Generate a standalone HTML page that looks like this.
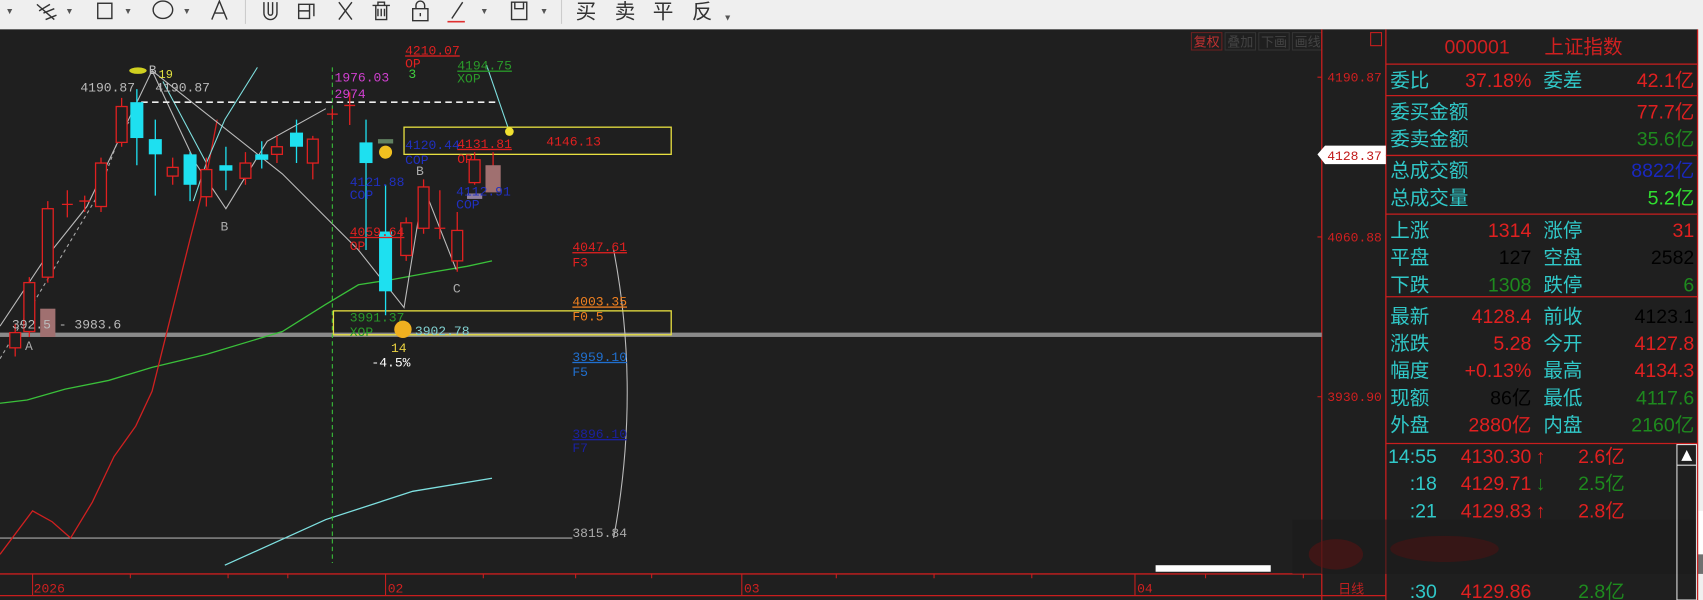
<!DOCTYPE html>
<html><head><meta charset="utf-8"><style>
html,body{margin:0;padding:0;width:1703px;height:600px;overflow:hidden;background:#efefef}
svg{display:block}
.m{font-family:"Liberation Mono","Noto Sans CJK SC",monospace;font-size:12px}
.p{font-family:"Liberation Sans","Noto Sans CJK SC",sans-serif;font-size:18px}
.tb{font-family:"Liberation Sans","Noto Sans CJK SC",sans-serif;font-size:19px;fill:#333}
</style></head><body>
<svg width="1703" height="600" viewBox="0 0 1568 552" preserveAspectRatio="none" xmlns="http://www.w3.org/2000/svg">
<rect x="0" y="0" width="1568" height="552" fill="#efefef"/>
<!-- toolbar -->
<g stroke="#333" fill="none" stroke-width="1.3">
<path d="M34 4 L50 18 M36 10 L46 4 M40 12 L50 8 M42 18 L52 14"/>
<rect x="90" y="3" width="13" height="14"/>
<ellipse cx="150" cy="9" rx="9" ry="8"/>
<path d="M195 18 L202 1 L209 18 M198 12 L206 12"/>
<path d="M243 2 V12 A6 6 0 0 0 255 12 V2 M247 2 V12 A2 2 0 0 0 251 12 V2"/>
<path d="M275 4 H285 V17 H275 Z M275 10 H285 M285 4 H289 V15"/>
<path d="M312 2 L324 18 M324 2 L312 18"/>
<path d="M343 5 H359 M346 5 V18 H356 V5 M348 8 V15 M351 8 V15 M354 8 V15 M348 5 V2 H354 V5"/>
<path d="M380 8 H394 V19 H380 Z M383 8 V5 A4 4 0 0 1 391 5 V8 M387 12 V15"/>
<path d="M416 17 L426 2"/>
<path d="M471 2 H485 V18 H471 Z M474 2 V8 H482 V2"/>
</g>
<path d="M412 20 H428" stroke="#e03030" stroke-width="1.5"/>
<path d="M226 0 V22 M517 0 V22" stroke="#ccc"/>
<g fill="#555" font-size="8" font-family="Liberation Sans">
<text x="5" y="13">▼</text><text x="60" y="13">▼</text><text x="114" y="13">▼</text><text x="168" y="13">▼</text><text x="442" y="13">▼</text><text x="497" y="13">▼</text><text x="666" y="19">▼</text>
</g>
<text class="tb" x="530" y="17">买</text><text class="tb" x="566" y="17">卖</text><text class="tb" x="601" y="17">平</text><text class="tb" x="637" y="17">反</text>
<!-- main dark area -->
<rect x="0" y="27" width="1563" height="525" fill="#1f1f1f"/>
<!-- top right buttons -->
<g class="m" font-size="11">
<rect x="1097" y="30" width="28" height="16" fill="none" stroke="#6a2020"/><text x="1099" y="43" fill="#c03030">复权</text>
<rect x="1128" y="30" width="28" height="16" fill="none" stroke="#333"/><text x="1130" y="43" fill="#444">叠加</text>
<rect x="1159" y="30" width="28" height="16" fill="none" stroke="#333"/><text x="1161" y="43" fill="#444">下画</text>
<rect x="1190" y="30" width="27" height="16" fill="none" stroke="#333"/><text x="1192" y="43" fill="#444">画线</text>
</g>
<!-- axes -->
<path d="M1217 27 V552 M1276 27 V552 M0 528 H1217 M0 548 H1276" stroke="#c81e1e" stroke-width="1.2"/>
<path d="M30 528 V548 M355 528 V548 M683 528 V548 M1045 528 V548 M120 528 v4 M210 528 v4 M265 528 v4 M445 528 v4 M530 528 v4 M600 528 v4 M770 528 v4 M860 528 v4 M950 528 v4 M1110 528 v4 M1200 528 v4 M1217 71 h-4 M1217 218 h-4 M1217 365 h-4" stroke="#c81e1e"/>
<g class="m" fill="#d02020">
<text x="31" y="545">2026</text><text x="357" y="545">02</text><text x="685" y="545">03</text><text x="1047" y="545">04</text>
<text x="1222" y="75">4190.87</text><text x="1222" y="222">4060.88</text><text x="1222" y="369">3930.90</text>
</g>
<text x="1232" y="546" class="m" fill="#c02020" font-size="13">日线</text>
<rect x="1262" y="30" width="10" height="12" fill="none" stroke="#c81e1e"/>
<path d="M1213 142 L1220 134 H1276 V151 H1220 Z" fill="#fff"/>
<text x="1222" y="147" class="m" fill="#c01818">4128.37</text>
<!-- blurred zone -->
<rect x="1190" y="478" width="378" height="50" fill="#1a1a1a" opacity=".6"/>
<ellipse cx="1330" cy="505" rx="50" ry="12" fill="#501010" opacity=".5"/>
<ellipse cx="1230" cy="510" rx="25" ry="14" fill="#601010" opacity=".5"/>
<rect x="1064" y="520" width="106" height="6" fill="#fff"/>
<rect x="1563" y="470" width="5" height="40" fill="#fff"/>
<!-- gray horizontal -->
<rect x="0" y="306" width="1217" height="4" fill="#8a8a8a"/>
<path d="M0 495 H527" stroke="#aaa"/>
<!-- MA lines -->
<polyline points="0,371 25,368 60,358 100,350 140,338 190,326 260,305 300,280 330,262 362,257 400,250 430,245 453,240" fill="none" stroke="#3ac03a" stroke-width="1.2"/>
<polyline points="0,510 30,470 48,480 65,495 85,462 105,420 125,392 140,360 150,320 165,260 175,220 190,162 200,110" fill="none" stroke="#d02020" stroke-width="1.2"/>
<polyline points="207,520 300,478 380,452 453,440" fill="none" stroke="#7ee0e0" stroke-width="1.2"/>
<polyline points="0,330 30,280 60,230 90,180 112,120 128,102" fill="none" stroke="#aaa" stroke-dasharray="3 3"/>
<polyline points="0,300 40,240 80,190 140,65 180,150 208,192 246,130 300,100" fill="none" stroke="#bbb"/>
<polyline points="140,65 260,160 330,230 372,283 390,172 420,248" fill="none" stroke="#bbb"/>
<polyline points="150,75 190,150 207,110 237,62" fill="none" stroke="#7ee0e0"/>
<polyline points="178,185 190,150" fill="none" stroke="#7ee0e0"/>
<polyline points="448,60 468,118" fill="none" stroke="#7ee0e0"/>
<path d="M130 94 H460" stroke="#eee" stroke-width="1.5" stroke-dasharray="6 4"/>
<path d="M306 62 V518" stroke="#3ac03a" stroke-dasharray="4 3"/>
<!-- fib arc -->
<path d="M565 230 Q590 360 565 495" fill="none" stroke="#bbb"/>
<!-- yellow boxes -->
<rect x="372" y="117" width="246" height="25" fill="none" stroke="#e8e040" stroke-width="1.2"/>
<rect x="307" y="286" width="311" height="22" fill="none" stroke="#e8e040" stroke-width="1.2"/>
<circle cx="469" cy="121" r="4" fill="#f0e030"/>
<!-- candles -->
<g stroke="#e02020" fill="none" stroke-width="1.2">
<path d="M14 298 v30 M27 255 v55 M44 185 v75 M62 175 v25 M78 180 v15 M93 145 v50 M112 90 v45 M159 145 v25 M190 145 v45 M226 140 v30 M255 125 v25 M288 125 v40 M306 100 v10 M322 85 v30 M374 200 v40 M390 165 v50 M405 175 v45 M421 195 v55 M437 140 v30 M454 140 v15"/>
<rect x="9" y="306" width="10" height="14" fill="#1f1f1f"/>
<rect x="22" y="260" width="10" height="45" fill="#1f1f1f"/>
<rect x="39" y="192" width="10" height="63" fill="#1f1f1f"/>
<rect x="88" y="150" width="10" height="40" fill="#1f1f1f"/>
<rect x="107" y="98" width="10" height="33" fill="#1f1f1f"/>
<rect x="154" y="154" width="10" height="8" fill="#1f1f1f"/>
<rect x="185" y="156" width="10" height="25" fill="#1f1f1f"/>
<rect x="221" y="150" width="10" height="14" fill="#1f1f1f"/>
<rect x="250" y="135" width="10" height="7" fill="#1f1f1f"/>
<rect x="283" y="128" width="10" height="22" fill="#1f1f1f"/>
<rect x="369" y="205" width="10" height="30" fill="#1f1f1f"/>
<rect x="385" y="172" width="10" height="38" fill="#1f1f1f"/>
<rect x="416" y="212" width="10" height="28" fill="#1f1f1f"/>
<rect x="432" y="147" width="10" height="21" fill="#1f1f1f"/>
<path d="M57 188 h10 M73 185 h10 M301 105 h10 M317 97 h10 M400 210 h10"/>
</g>
<rect x="37" y="284" width="14" height="26" fill="#a07070"/>
<rect x="447" y="152" width="14" height="25" fill="#a07070"/>
<g stroke="#1ee0f0" stroke-width="1.2"><path d="M126 82 v70 M143 110 v70 M175 140 v45 M208 135 v40 M241 130 v25 M273 110 v40 M337 110 v120 M355 170 v120"/></g>
<g fill="#1ee0f0">
<rect x="120" y="94" width="12" height="33"/><rect x="137" y="128" width="12" height="14"/><rect x="169" y="142" width="12" height="28"/>
<rect x="202" y="152" width="12" height="5"/><rect x="235" y="142" width="12" height="5"/><rect x="267" y="122" width="12" height="13"/>
<rect x="331" y="131" width="12" height="19"/><rect x="349" y="213" width="12" height="55"/>
</g>
<rect x="430" y="178" width="14" height="5" fill="#9080a0"/>
<!-- labels on chart -->
<g class="m">
<text x="74" y="84" fill="#bbb">4190.87</text><text x="143" y="84" fill="#bbb">4190.87</text>
<text x="137" y="68" fill="#bbb">B</text><text x="146" y="72" fill="#e0e040" font-size="11">19</text>
<text x="203" y="212" fill="#aaa">B</text><text x="383" y="161" fill="#aaa">B</text><text x="417" y="269" fill="#aaa">C</text>
<text x="23" y="322" fill="#aaa">A</text>
<text x="11" y="302" fill="#bbb">392.5 - 3983.6</text>
<text x="373" y="50" fill="#e02020" text-decoration="underline">4210.07</text><text x="373" y="62" fill="#e02020">OP</text>
<text x="421" y="64" fill="#2a9a2a" text-decoration="underline">4194.75</text><text x="421" y="76" fill="#2a9a2a">XOP</text>
<text x="308" y="75" fill="#d040d0">1976.03</text><text x="308" y="90" fill="#d040d0">2974</text><text x="376" y="72" fill="#40d040">3</text>
<text x="373" y="137" fill="#2030c0">4120.44</text><text x="373" y="151" fill="#2030c0">COP</text>
<text x="421" y="136" fill="#e02020" text-decoration="underline">4131.81</text><text x="421" y="150" fill="#e02020">OP</text>
<text x="503" y="134" fill="#e02020">4146.13</text>
<text x="322" y="171" fill="#2030c0">4121.88</text><text x="322" y="183" fill="#2030c0">COP</text>
<text x="420" y="180" fill="#2030c0">4112.91</text><text x="420" y="192" fill="#2030c0">COP</text>
<text x="322" y="217" fill="#e02020" text-decoration="underline">4059.64</text><text x="322" y="230" fill="#e02020">OP</text>
<text x="527" y="231" fill="#e02020" text-decoration="underline">4047.61</text><text x="527" y="245" fill="#e02020">F3</text>
<text x="527" y="281" fill="#f08020" text-decoration="underline">4003.35</text><text x="527" y="295" fill="#f08020">F0.5</text>
<text x="322" y="296" fill="#2a9a2a">3991.37</text><text x="322" y="309" fill="#2a9a2a">XOP</text>
<text x="382" y="308" fill="#80d0d0">3902.78</text>
<text x="360" y="324" fill="#e8d040">14</text><text x="342" y="337" fill="#fff">-4.5%</text>
<text x="527" y="332" fill="#2070d0" text-decoration="underline">3959.10</text><text x="527" y="346" fill="#2070d0">F5</text>
<text x="527" y="403" fill="#1a20a0" text-decoration="underline">3896.10</text><text x="527" y="416" fill="#1a20a0">F7</text>
<text x="527" y="494" fill="#aaa">3815.84</text>
</g>
<circle cx="371" cy="303" r="8" fill="#f0b020"/><circle cx="355" cy="140" r="6" fill="#f0c020"/>
<rect x="348" y="128" width="14" height="4" fill="#608060"/>
<ellipse cx="127" cy="65" rx="8" ry="3" fill="#d0d020"/>
<!-- right panel -->
<g stroke="#c81e1e" stroke-width="1.2" fill="none"><path d="M1276 59 H1563 M1276 88 H1563 M1276 143 H1563 M1276 197 H1563 M1276 273 H1563 M1276 408 H1563 M1563 27 V552"/></g>
<text x="1330" y="49" class="p" font-size="20" fill="#d02020">000001</text><text x="1422" y="49" class="p" font-size="20" fill="#d02020">上证指数</text>
<g class="p" fill="#30c8c8">
<text x="1280" y="80">委比</text><text x="1421" y="80">委差</text>
<text x="1280" y="109">委买金额</text><text x="1280" y="134">委卖金额</text>
<text x="1280" y="163">总成交额</text><text x="1280" y="188">总成交量</text>
<text x="1280" y="218">上涨</text><text x="1421" y="218">涨停</text>
<text x="1280" y="243">平盘</text><text x="1421" y="243">空盘</text>
<text x="1280" y="268">下跌</text><text x="1421" y="268">跌停</text>
<text x="1280" y="297">最新</text><text x="1421" y="297">前收</text>
<text x="1280" y="322">涨跌</text><text x="1421" y="322">今开</text>
<text x="1280" y="347">幅度</text><text x="1421" y="347">最高</text>
<text x="1280" y="372">现额</text><text x="1421" y="372">最低</text>
<text x="1280" y="397">外盘</text><text x="1421" y="397">内盘</text>
</g>
<g class="p" text-anchor="end">
<text x="1410" y="80" fill="#e02020">37.18%</text><text x="1560" y="80" fill="#e02020">42.1亿</text>
<text x="1560" y="109" fill="#e02020">77.7亿</text><text x="1560" y="134" fill="#1e8a1e">35.6亿</text>
<text x="1560" y="163" fill="#1a28c0">8822亿</text><text x="1560" y="188" fill="#30e030">5.2亿</text>
<text x="1410" y="218" fill="#e02020">1314</text><text x="1560" y="218" fill="#e02020">31</text>
<text x="1410" y="243" fill="#000">127</text><text x="1560" y="243" fill="#000">2582</text>
<text x="1410" y="268" fill="#1e8a1e">1308</text><text x="1560" y="268" fill="#1e8a1e">6</text>
<text x="1410" y="297" fill="#e02020">4128.4</text><text x="1560" y="297" fill="#000">4123.1</text>
<text x="1410" y="322" fill="#e02020">5.28</text><text x="1560" y="322" fill="#e02020">4127.8</text>
<text x="1410" y="347" fill="#e02020">+0.13%</text><text x="1560" y="347" fill="#e02020">4134.3</text>
<text x="1410" y="372" fill="#000">86亿</text><text x="1560" y="372" fill="#1e8a1e">4117.6</text>
<text x="1410" y="397" fill="#e02020">2880亿</text><text x="1560" y="397" fill="#1e8a1e">2160亿</text>
<text x="1323" y="426" fill="#30c8c8">14:55</text><text x="1410" y="426" fill="#e02020">4130.30</text><text x="1496" y="426" fill="#e02020">2.6亿</text>
<text x="1323" y="451" fill="#30c8c8">:18</text><text x="1410" y="451" fill="#e02020">4129.71</text><text x="1496" y="451" fill="#1e8a1e">2.5亿</text>
<text x="1323" y="476" fill="#30c8c8">:21</text><text x="1410" y="476" fill="#e02020">4129.83</text><text x="1496" y="476" fill="#e02020">2.8亿</text>
<text x="1323" y="550" fill="#30c8c8">:30</text><text x="1410" y="550" fill="#e02020">4129.86</text><text x="1496" y="550" fill="#1e8a1e">2.8亿</text>
</g>
<g class="p"><text x="1414" y="426" fill="#e02020">↑</text><text x="1414" y="451" fill="#1e8a1e">↓</text><text x="1414" y="476" fill="#e02020">↑</text></g>
<rect x="1544" y="409" width="18" height="143" fill="none" stroke="#ddd"/>
<path d="M1544 428 H1562" stroke="#ddd"/>
<path d="M1548 424 L1553 414 L1558 424 Z" fill="#fff"/>
</svg>
</body></html>
